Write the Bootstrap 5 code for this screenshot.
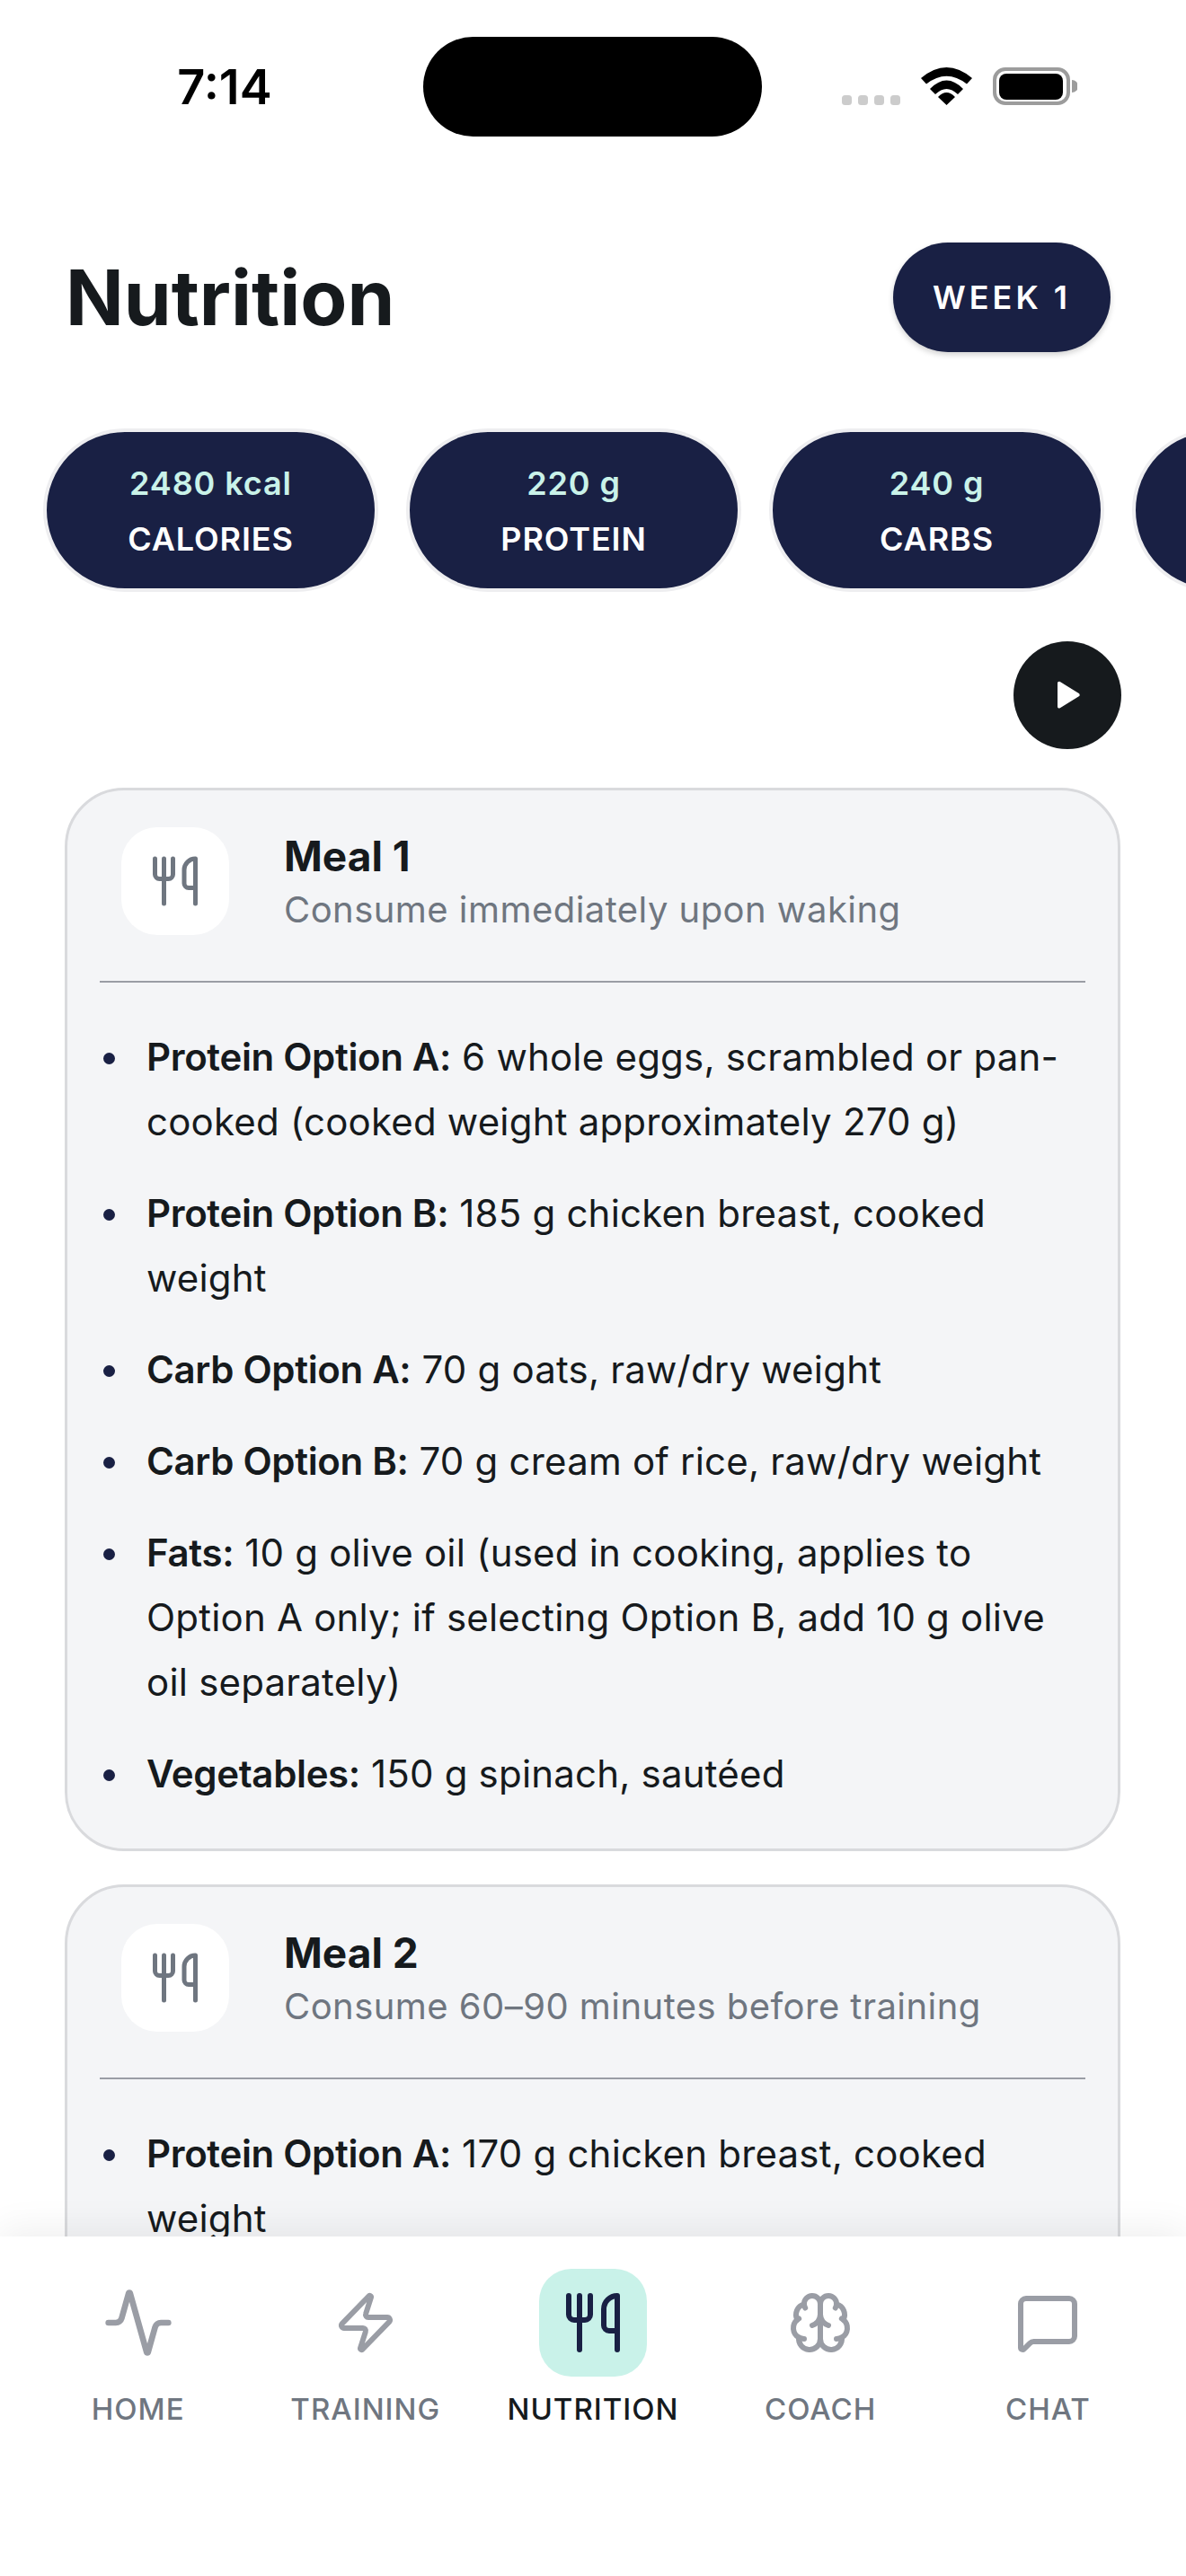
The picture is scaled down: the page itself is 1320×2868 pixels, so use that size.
<!DOCTYPE html>
<html>

<head>
  <meta charset="utf-8">
  <meta name="viewport" content="width=device-width">
  <title>Nutrition</title>
  <link href="https://cdn.jsdelivr.net/npm/bootstrap@5.3.3/dist/css/bootstrap.min.css" rel="stylesheet" type="text/css" />
  <style>
    body{
      font-family: Inter, "Liberation Sans", sans-serif;
      color: #161a1d;
      background: #fff;
      height: 2868px;
      overflow: hidden;
    }
    .status-row{ height: 266px; padding-top: 41px; }
    .status-time{ width: 471px; padding-left: 29px; font-size: 54px; font-weight: 600; line-height: 112px; color: #000; text-align: center; }
    .status-island{ width: 377px; height: 111px; background: #000; border-radius: 56px; }
    .status-icons{ margin-left: 89px; margin-top: 34px; }
    .page-head{ padding: 0 84px 0 73px; height: 130px; }
    .page-title{ font-size: 85px; font-weight: 700; margin: 0; line-height: 1; }
    .week-pill{ background: #192044; color: #fff; border-radius: 61px; padding: 0 44px; height: 122px; font-size: 36px; font-weight: 600; letter-spacing: 4px; box-shadow: 0 3px 6px rgba(0,0,0,.18); }
    .macro-row{ margin-top: 81px; padding-left: 48px; gap: 31px; overflow: hidden; }
    .macro-pill{ flex: 0 0 373px; height: 182px; padding-top: 2px; background: #192044; border: 4px solid #eeeef0; border-radius: 91px; color: #fff; font-size: 36px; font-weight: 600; line-height: 62px; letter-spacing: .9px; }
    .macro-val{ color: #c9f2e9; }
    .play-row{ margin-top: 55px; padding-right: 72px; }
    .play-btn{ width: 120px; height: 120px; background: #161a1d; }
    .meal-list-wrap{ padding: 43px 73px 0 72px; gap: 37px; }
    .meal-card{ background: #f4f5f7; border: 3px solid #d9dadd; border-radius: 66px; flex-shrink: 0; padding: 41px 36px 47px; }
    .meal-head{ padding: 0 0 51px 24px; gap: 61px; border-bottom: 2px solid #9a9da5; }
    .meal-icon{ width: 120px; height: 120px; background: #fff; border-radius: 40px; flex-shrink: 0; }
    .meal-text{ padding-top: 2px; }
    .meal-name{ font-size: 46px; font-weight: 700; line-height: 60px; margin: 0; }
    .meal-sub{ margin-top: 2px; font-size: 40px; color: #6f7680; letter-spacing: .45px; line-height: 56px; }
    .meal-items{ margin: 47px 0 0; padding-left: 52px; list-style: none; font-size: 42px; line-height: 72px; letter-spacing: .2px; }
    .meal-items li{ margin-bottom: 30px; position: relative; }
    .meal-items li:last-child{ margin-bottom: 0; }
    .meal-items li::before{ content: ""; position: absolute; left: -48px; top: 31px; width: 13px; height: 13px; border-radius: 50%; background: #192044; }
    .meal-items strong{ font-weight: 600; letter-spacing: -.35px; }
    .tab-bar{ height: 378px; background: #fff; padding: 36px 27px 0; box-shadow: 0 -6px 40px rgba(0,0,0,.07); position: relative; }
    .tab-item{ width: 253.6px; }
    .tab-icon{ width: 120px; height: 120px; border-radius: 36px; }
    .tab-item.active .tab-icon{ background: #c9f2e9; }
    .tab-label{ margin-top: 14px; font-size: 33px; line-height: 44px; letter-spacing: 1px; font-weight: 500; color: #6f7680; }
    .tab-item.active .tab-label{ color: #161a1d; }
    .tab-icon svg{ fill: none; stroke: #9a9da5; stroke-width: 2; stroke-linecap: round; stroke-linejoin: round; }
    .tab-item.active .tab-icon svg{ stroke: #192044; }
    .meal-icon svg{ fill: none; stroke: #6f7680; stroke-width: 2; stroke-linecap: round; stroke-linejoin: round; }
  </style>
</head>

<body class="d-flex flex-column">
  <div class="status-row d-flex align-items-start flex-shrink-0">
    <div class="status-time">7:14</div>
    <div class="status-island"></div>
    <svg class="status-icons" width="262" height="42" viewBox="0 0 262 42">
      <rect x="0" y="31" width="11" height="11" rx="3.5" fill="#ccc"/>
      <rect x="18" y="31" width="11" height="11" rx="3.5" fill="#ccc"/>
      <rect x="36" y="31" width="11" height="11" rx="3.5" fill="#ccc"/>
      <rect x="54" y="31" width="11" height="11" rx="3.5" fill="#ccc"/>
      <path d="M88 12Q116.5 -12 145 12L139 18.5Q116.5 1 94 18.5Z M98 24Q116.5 5 135 24L129 30Q116.5 18 104 30Z M107 33Q116.5 23 126 33L116.5 42Z" fill="#000"/>
      <rect x="170" y="2" width="82" height="38" rx="12" fill="none" stroke="#9c9c9c" stroke-width="4"/>
      <rect x="175" y="7" width="71" height="29" rx="8" fill="#000"/>
      <path d="M256 14a7 7 0 0 1 0 14z" fill="#9c9c9c"/>
    </svg>
  </div>

  <div class="page-head d-flex justify-content-between align-items-center flex-shrink-0">
    <h1 class="page-title">Nutrition</h1>
    <div class="week-pill d-flex align-items-center">WEEK 1</div>
  </div>

  <div class="macro-row d-flex flex-shrink-0">
    <div class="macro-pill d-flex flex-column align-items-center justify-content-center text-center"><div class="macro-val">2480 kcal</div><div>CALORIES</div></div>
    <div class="macro-pill d-flex flex-column align-items-center justify-content-center text-center"><div class="macro-val">220 g</div><div>PROTEIN</div></div>
    <div class="macro-pill d-flex flex-column align-items-center justify-content-center text-center"><div class="macro-val">240 g</div><div>CARBS</div></div>
    <div class="macro-pill"></div>
  </div>

  <div class="play-row d-flex justify-content-end flex-shrink-0">
    <div class="play-btn rounded-circle d-flex align-items-center justify-content-center">
      <svg width="40" height="40" viewBox="0 0 40 40"><path d="M9 6.500c0-1.500 1.500-2.300 2.800-1.500l21 13c1.200.8 1.200 2.500 0 3.300l-21 13c-1.300.8-2.800 0-2.800-1.500z" fill="#fff"/></svg>
    </div>
  </div>

  <main class="meal-list-wrap d-flex flex-column flex-grow-1 overflow-hidden">
    <section class="meal-card">
      <div class="meal-head d-flex align-items-center">
        <div class="meal-icon d-flex align-items-center justify-content-center">
          <svg width="60" height="60" viewBox="0 0 24 24"><path d="M3 2v7c0 1.100.9 2 2 2h4a2 2 0 0 0 2-2V2"/><path d="M7 2v20"/><path d="M21 15V2a5 5 0 0 0-5 5v6c0 1.100.9 2 2 2h3Zm0 0v7"/></svg>
        </div>
        <div class="meal-text">
          <p class="meal-name">Meal 1</p>
          <div class="meal-sub">Consume immediately upon waking</div>
        </div>
      </div>
      <ul class="meal-items">
        <li><strong>Protein Option A:</strong> 6 whole eggs, scrambled or pan-cooked (cooked weight approximately 270 g)</li>
        <li><strong>Protein Option B:</strong> 185 g chicken breast, cooked weight</li>
        <li><strong>Carb Option A:</strong> 70 g oats, raw/dry weight</li>
        <li><strong>Carb Option B:</strong> 70 g cream of rice, raw/dry weight</li>
        <li><strong>Fats:</strong> 10 g olive oil (used in cooking, applies to Option A only; if selecting Option B, add 10 g olive oil separately)</li>
        <li><strong>Vegetables:</strong> 150 g spinach, sautéed</li>
      </ul>
    </section>
    <section class="meal-card">
      <div class="meal-head d-flex align-items-center">
        <div class="meal-icon d-flex align-items-center justify-content-center">
          <svg width="60" height="60" viewBox="0 0 24 24"><path d="M3 2v7c0 1.100.9 2 2 2h4a2 2 0 0 0 2-2V2"/><path d="M7 2v20"/><path d="M21 15V2a5 5 0 0 0-5 5v6c0 1.100.9 2 2 2h3Zm0 0v7"/></svg>
        </div>
        <div class="meal-text">
          <p class="meal-name">Meal 2</p>
          <div class="meal-sub">Consume 60–90 minutes before training</div>
        </div>
      </div>
      <ul class="meal-items">
        <li><strong>Protein Option A:</strong> 170 g chicken breast, cooked weight</li>
      </ul>
    </section>
  </main>

  <nav class="tab-bar d-flex flex-shrink-0">
    <div class="tab-item d-flex flex-column align-items-center">
      <div class="tab-icon d-flex align-items-center justify-content-center">
        <svg width="80" height="80" viewBox="0 0 24 24"><path d="M22 12h-2.480a2 2 0 0 0-1.930 1.460l-2.350 8.360a.25.25 0 0 1-.48 0L9.240 2.180a.25.25 0 0 0-.48 0l-2.350 8.360A2 2 0 0 1 4.490 12H2"/></svg>
      </div>
      <div class="tab-label">HOME</div>
    </div>
    <div class="tab-item d-flex flex-column align-items-center">
      <div class="tab-icon d-flex align-items-center justify-content-center">
        <svg width="72" height="72" viewBox="0 0 24 24"><path d="M4 14a1 1 0 0 1-.78-1.630l9.900-10.200a.5.5 0 0 1 .86.46l-1.920 6.020A1 1 0 0 0 13 10h7a1 1 0 0 1 .78 1.630l-9.900 10.200a.5.5 0 0 1-.86-.46l1.920-6.020A1 1 0 0 0 11 14z"/></svg>
      </div>
      <div class="tab-label">TRAINING</div>
    </div>
    <div class="tab-item active d-flex flex-column align-items-center">
      <div class="tab-icon d-flex align-items-center justify-content-center">
        <svg width="72" height="72" viewBox="0 0 24 24"><path d="M3 2v7c0 1.100.9 2 2 2h4a2 2 0 0 0 2-2V2"/><path d="M7 2v20"/><path d="M21 15V2a5 5 0 0 0-5 5v6c0 1.100.9 2 2 2h3Zm0 0v7"/></svg>
      </div>
      <div class="tab-label">NUTRITION</div>
    </div>
    <div class="tab-item d-flex flex-column align-items-center">
      <div class="tab-icon d-flex align-items-center justify-content-center">
        <svg width="72" height="72" viewBox="0 0 24 24"><path d="M12 5a3 3 0 1 0-5.997.125 4 4 0 0 0-2.526 5.770 4 4 0 0 0 .556 6.588A4 4 0 1 0 12 18Z"/><path d="M12 5a3 3 0 1 1 5.997.125 4 4 0 0 1 2.526 5.770 4 4 0 0 1-.556 6.588A4 4 0 1 1 12 18Z"/><path d="M15 13a4.500 4.500 0 0 1-3-4 4.500 4.500 0 0 1-3 4"/><path d="M17.599 6.500a3 3 0 0 0 .399-1.375"/><path d="M6.003 5.125A3 3 0 0 0 6.401 6.500"/><path d="M3.477 10.896a4 4 0 0 1 .585-.396"/><path d="M19.938 10.500a4 4 0 0 1 .585.396"/><path d="M6 18a4 4 0 0 1-1.967-.516"/><path d="M19.967 17.484A4 4 0 0 1 18 18"/></svg>
      </div>
      <div class="tab-label">COACH</div>
    </div>
    <div class="tab-item d-flex flex-column align-items-center">
      <div class="tab-icon d-flex align-items-center justify-content-center">
        <svg width="72" height="72" viewBox="0 0 24 24"><path d="M22 17a2 2 0 0 1-2 2H6.828a2 2 0 0 0-1.414.586l-2.202 2.202A.71.71 0 0 1 2 21.286V5a2 2 0 0 1 2-2h16a2 2 0 0 1 2 2z"/></svg>
      </div>
      <div class="tab-label">CHAT</div>
    </div>
  </nav>
  <script src="https://cdn.jsdelivr.net/npm/bootstrap@5.3.3/dist/js/bootstrap.bundle.min.js"></script>
</body>

</html>
